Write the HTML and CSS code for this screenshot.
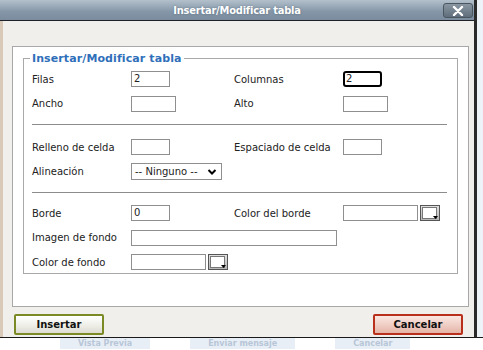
FILE: index.html
```html
<!DOCTYPE html>
<html lang="es">
<head>
<meta charset="utf-8">
<title>Insertar/Modificar tabla</title>
<link rel="stylesheet" href="styles.css">
</head>
<body>
<div class="dialog">
  <div class="titlebar">
    <span class="title">Insertar/Modificar tabla</span>
    <span class="close">
      <svg width="12" height="10" viewBox="0 0 12 10"><path d="M2 1 L10 9 M10 1 L2 9" stroke="#fff" stroke-width="2.4" stroke-linecap="round"/></svg>
    </span>
  </div>
  <div class="body">
    <div class="panel">
      <fieldset class="group">
        <legend>Insertar/Modificar tabla</legend>
        <div class="grid">
          <span class="lbl">Filas</span><span class="inp w39">2</span>
          <span class="lbl">Columnas</span><span class="inp w39 focused">2</span>
          <span class="lbl">Ancho</span><span class="inp w45"></span>
          <span class="lbl">Alto</span><span class="inp w45"></span>
        </div>
        <hr class="sep first">
        <div class="grid">
          <span class="lbl">Relleno de celda</span><span class="inp w39"></span>
          <span class="lbl">Espaciado de celda</span><span class="inp w39"></span>
          <span class="lbl">Alineación</span>
          <span class="sel">-- Ninguno --<svg width="10" height="8" viewBox="0 0 10 8"><path d="M1.5 2 L5 5.5 L8.5 2" fill="none" stroke="#000" stroke-width="2"/></svg></span>
        </div>
        <hr class="sep">
        <div class="grid">
          <span class="lbl">Borde</span><span class="inp w39">0</span>
          <span class="lbl">Color del borde</span>
          <span class="picker"><span class="inp w75"></span><span class="pbtn"><svg width="18" height="14" viewBox="0 0 18 14"><rect x="1.5" y="1.5" width="14" height="11" fill="#fff" stroke="#777"/><path d="M12 10 h5 l-2.5 3 z" fill="#000"/></svg></span></span>
          <span class="lbl">Imagen de fondo</span><span class="inp wide"></span>
          <span class="lbl">Color de fondo</span>
          <span class="picker"><span class="inp w75"></span><span class="pbtn"><svg width="18" height="14" viewBox="0 0 18 14"><rect x="1.5" y="1.5" width="14" height="11" fill="#fff" stroke="#777"/><path d="M12 10 h5 l-2.5 3 z" fill="#000"/></svg></span></span>
        </div>
      </fieldset>
    </div>
    <div class="actions">
      <button class="btn ok">Insertar</button>
      <button class="btn cancel">Cancelar</button>
    </div>
  </div>
</div>
<div class="behind">
  <span class="bb">Vista Previa</span>
  <span class="bb">Enviar mensaje</span>
  <span class="bb">Cancelar</span>
</div>
</body>
</html>
```
FILE: styles.css
```css
html, body {
  margin: 0;
  padding: 0;
  background: #eef3f8;
  font-family: "DejaVu Sans", Verdana, sans-serif;
  width: 483px;
  height: 350px;
  overflow: hidden;
}
.dialog {
  width: 477px;
  box-sizing: border-box;
  border-right: 3px solid #2a2a2a;
}
.titlebar {
  height: 20px;
  background: linear-gradient(#b3c0cc, #8395a6 60%, #7a8c9e);
  border-bottom: 1px solid #1e2226;
  display: flex;
  align-items: center;
  justify-content: center;
  position: relative;
}
.title {
  color: #fff;
  font-family: "DejaVu Sans Condensed", "DejaVu Sans", sans-serif;
  font-weight: bold;
  font-size: 11px;
  letter-spacing: -0.2px;
  text-shadow: 0 0 2px rgba(60,80,100,0.6);
}
.close {
  position: absolute;
  left: 443px;
  top: 3px;
  width: 28px;
  height: 13px;
  border: 1px solid #4a5660;
  border-radius: 3px;
  background: linear-gradient(#8a97a3, #5f6d7a);
  display: flex;
  align-items: center;
  justify-content: center;
}
.body {
  background: #f0efeb;
  border-left: 3px solid #d8c9b8;
  height: 316px;
  box-sizing: border-box;
  padding: 25px 5px 0 9px;
  display: flex;
  flex-direction: column;
}
.panel {
  background: #fff;
  border: 1px solid #a8a8a8;
  height: 261px;
  box-sizing: border-box;
  padding: 5px 10px 0 10px;
}
.group {
  margin: 0;
  border: 1px solid #a9a9a9;
  padding: 2px 0 0 8px;
  height: 222px;
  box-sizing: border-box;
}
.group legend {
  color: #2f6fba;
  font-weight: bold;
  font-size: 11px;
  padding: 0 2px;
  margin-left: -2px;
  letter-spacing: 0.1px;
}
.grid {
  display: grid;
  grid-template-columns: 99px 103px 109px 1fr;
  grid-auto-rows: 24.5px;
  align-items: center;
  font-size: 10px;
  color: #222;
}
.lbl {
  white-space: nowrap;
}
.inp {
  display: block;
  height: 16px;
  box-sizing: border-box;
  border: 1px solid #8f8f8f;
  background: #fff;
  font-size: 10px;
  line-height: 14px;
  padding-left: 2px;
}
.w39 { width: 39px; }
.w45 { width: 45px; }
.w75 { width: 75px; }
.wide { width: 206px; grid-column: span 3; }
.focused {
  border: 2px solid #000;
  border-radius: 3px;
  line-height: 12px;
  padding-left: 1px;
}
.sel {
  width: 91px;
  height: 17px;
  box-sizing: border-box;
  border: 1px solid #8f8f8f;
  display: flex;
  align-items: center;
  justify-content: space-between;
  padding: 0 4px 0 3px;
  font-size: 10px;
  grid-column: span 3;
  justify-self: start;
}
.picker {
  display: flex;
  align-items: center;
  gap: 2px;
}
.pbtn {
  width: 20px;
  height: 16px;
  box-sizing: border-box;
  border: 1px solid #555;
  background: linear-gradient(#e0e0e0, #b8b8b8);
  display: flex;
  align-items: center;
  justify-content: center;
}
.pbtn svg { display: block; }
.sep {
  border: 0;
  border-top: 1px solid #8c8c8c;
  margin: 8px 10px 8px 0;
  height: 0;
}
.sep.first {
  margin-bottom: 10px;
}
.actions {
  display: flex;
  justify-content: space-between;
  padding: 7px 6px 0 2px;
}
.btn {
  width: 90px;
  height: 21px;
  font-family: "DejaVu Sans", sans-serif;
  font-weight: bold;
  font-size: 10px;
  color: #111;
  border-radius: 2px;
  padding: 0;
}
.ok {
  border: 2px solid #7b8a25;
  background: linear-gradient(#ffffff, #f0f0ea 50%, #dedcd2);
}
.cancel {
  border: 2px solid #b8301c;
  background: linear-gradient(#fbe7e2, #f0cfc6 50%, #e5b3a6);
}
.behind {
  height: 13px;
  border-top: 1px solid #1a1a1a;
  display: flex;
  align-items: flex-start;
  padding-left: 60px;
  background: #fff;
}
.bb {
  font-family: "DejaVu Sans", sans-serif;
  font-weight: bold;
  font-size: 8px;
  color: #b7c6d8;
  line-height: 11px;
  padding: 0 18px;
  background: #e8eef5;
  margin-right: 40px;
}
```
